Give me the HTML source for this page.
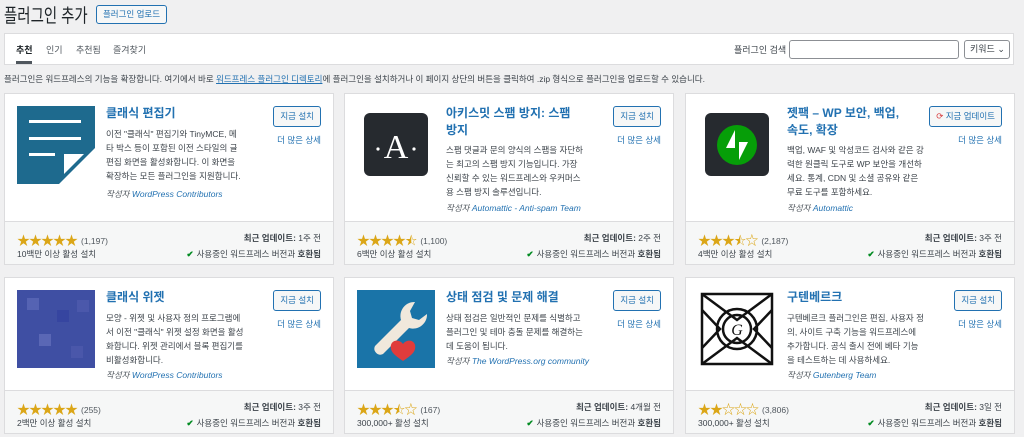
<!DOCTYPE html>
<html><head><meta charset="utf-8"><style>
*{margin:0;padding:0;box-sizing:border-box}
body{width:1024px;height:437px;overflow:hidden;background:#f0f0f1;font-family:"Liberation Sans","Noto Sans CJK KR",sans-serif;color:#3c434a;font-size:11px;position:relative}
.abs{position:absolute}
h1{position:absolute;left:4px;top:4px;font-size:19px;font-weight:400;color:#1d2327;line-height:26px;transform:scaleX(0.76);transform-origin:left;white-space:nowrap}
.upl{left:96px;top:5px;width:71px;height:19px;border:1px solid #2271b1;border-radius:3px;color:#2271b1;font-size:8.5px;line-height:17px;text-align:center;background:#f6f7f7}
.bar{left:4px;top:33px;width:1010px;height:32px;background:#fff;border:1px solid #dcdcde}
.tab{top:43px;font-size:9px;color:#50575e}
.desc{left:4px;top:73px;font-size:8.5px;color:#3c434a}
.desc a{color:#2271b1;text-decoration:underline}
.card{position:absolute;width:330px;height:172px;background:#fff;border:1px solid #dcdcde}
.foot{position:absolute;left:0;right:0;bottom:0;height:43px;background:#f6f7f7;border-top:1px solid #dcdcde}
.ic{position:absolute;left:12px;top:12px;width:78px;height:78px}
.tt{position:absolute;left:101px;top:11px;width:125px;font-size:12px;font-weight:700;color:#2271b1;line-height:17px}
.dd{position:absolute;left:101px;width:138px;font-size:8.5px;line-height:14px;color:#3c434a}
.by{position:absolute;left:101px;font-size:8.5px;font-style:italic;color:#50575e}
.by span{color:#2271b1}
.btn{position:absolute;right:12px;top:12px;height:21px;border:1px solid #2271b1;border-radius:3px;color:#2271b1;font-size:8.5px;line-height:19px;padding:0 6px;background:#f6f7f7}
.more{position:absolute;right:12px;top:40px;font-size:8.5px;color:#2271b1}
.st{position:absolute;left:12px;top:8px;font-size:13px;color:#dba617;letter-spacing:-1px}
.st i{font-style:normal;font-size:8.5px;color:#50575e;letter-spacing:0;margin-left:4px;vertical-align:1px}
.inst{position:absolute;left:12px;top:26px;font-size:8.5px}
.upd{position:absolute;right:12px;top:10px;font-size:8.5px}
.cmp{position:absolute;right:12px;top:26px;font-size:8.5px}
.cmp b,.upd b{font-weight:700}
.ok{color:#008a20;font-weight:700;margin-right:3px}
.r2{top:277px;height:157px}
</style></head><body>
<h1>플러그인 추가</h1>
<div class="abs upl">플러그인 업로드</div>
<div class="abs bar"></div>
<div class="abs tab" style="left:16px;color:#1d2327;font-weight:700">추천</div>
<div class="abs" style="left:16px;top:61px;width:16px;height:3px;background:#50575e"></div>
<div class="abs tab" style="left:46px">인기</div>
<div class="abs tab" style="left:76px">추천됨</div>
<div class="abs tab" style="left:113px">즐겨찾기</div>
<div class="abs" style="left:734px;top:43px;font-size:9px">플러그인 검색</div>
<div class="abs" style="left:789px;top:40px;width:170px;height:19px;border:1px solid #8c8f94;border-radius:3px;background:#fff"></div>
<div class="abs" style="left:964px;top:40px;width:46px;height:19px;border:1px solid #8c8f94;border-radius:3px;background:#fff;font-size:9px;line-height:17px;padding-left:5px">키워드 ⌄</div>
<div class="abs desc">플러그인은 워드프레스의 기능을 확장합니다. 여기에서 바로 <a>워드프레스 플러그인 디렉토리</a>에 플러그인을 설치하거나 이 페이지 상단의 버튼을 클릭하여 .zip 형식으로 플러그인을 업로드할 수 있습니다.</div>

<!-- row 1 -->
<div class="card" style="left:4px;top:93px">
 <svg class="ic" viewBox="0 0 78 78"><polygon points="0,0 78,0 78,42 42,78 0,78" fill="#1e6a8e"/><rect x="12" y="14" width="52" height="3" fill="#fff"/><rect x="12" y="31" width="52" height="3" fill="#fff"/><rect x="12" y="47" width="26" height="3" fill="#fff"/><polygon points="47,48 67,48 47,68" fill="#fff"/></svg>
 <div class="tt">클래식 편집기</div>
 <div class="dd" style="top:33px">이전 "클래식" 편집기와 TinyMCE, 메타 박스 등이 포함된 이전 스타일의 글 편집 화면을 활성화합니다. 이 화면을 확장하는 모든 플러그인을 지원합니다.</div>
 <div class="by" style="top:94px">작성자 <span>WordPress Contributors</span></div>
 <div class="btn">지금 설치</div><div class="more">더 많은 상세</div>
 <div class="foot"><div class="st">★★★★★<i>(1,197)</i></div><div class="inst">10백만 이상 활성 설치</div><div class="upd"><b>최근 업데이트:</b> 1주 전</div><div class="cmp"><span class="ok">✔</span>사용중인 워드프레스 버전과 <b>호환됨</b></div></div>
</div>
<div class="card" style="left:344px;top:93px">
 <svg class="ic" viewBox="0 0 78 78"><rect x="7" y="7" width="64" height="63" rx="6" fill="#262a2f"/><text x="39" y="52" text-anchor="middle" font-family="Liberation Serif,serif" font-size="34" fill="#fff">A</text><circle cx="21" cy="43" r="1.6" fill="#fff"/><circle cx="57" cy="43" r="1.6" fill="#fff"/></svg>
 <div class="tt">아키스밋 스팸 방지: 스팸 방지</div>
 <div class="dd" style="top:49px">스팸 댓글과 문의 양식의 스팸을 자단하는 최고의 스팸 방지 기능입니다. 가장 신뢰할 수 있는 워드프레스와 우커머스용 스팸 방지 솔루션입니다.</div>
 <div class="by" style="top:108px">작성자 <span>Automattic - Anti-spam Team</span></div>
 <div class="btn">지금 설치</div><div class="more">더 많은 상세</div>
 <div class="foot"><div class="st">★★★★<span>⯪</span><i>(1,100)</i></div><div class="inst">6백만 이상 활성 설치</div><div class="upd"><b>최근 업데이트:</b> 2주 전</div><div class="cmp"><span class="ok">✔</span>사용중인 워드프레스 버전과 <b>호환됨</b></div></div>
</div>
<div class="card" style="left:685px;top:93px">
 <svg class="ic" viewBox="0 0 78 78"><rect x="7" y="7" width="64" height="63" rx="6" fill="#262a2f"/><circle cx="39" cy="39" r="20" fill="#069e08"/><polygon points="37,24 37,42 28,42" fill="#fff"/><polygon points="41,54 41,36 50,36" fill="#fff"/></svg>
 <div class="tt">젯팩 – WP 보안, 백업, 속도, 확장</div>
 <div class="dd" style="top:49px">백업, WAF 및 악성코드 검사와 같은 강력한 원클릭 도구로 WP 보안을 개선하세요. 통계, CDN 및 소셜 공유와 같은 무료 도구를 포함하세요.</div>
 <div class="by" style="top:108px">작성자 <span>Automattic</span></div>
 <div class="btn"><span style="color:#d63638">⟳</span> 지금 업데이트</div><div class="more">더 많은 상세</div>
 <div class="foot"><div class="st">★★★<span>⯪</span><span>☆</span><i>(2,187)</i></div><div class="inst">4백만 이상 활성 설치</div><div class="upd"><b>최근 업데이트:</b> 3주 전</div><div class="cmp"><span class="ok">✔</span>사용중인 워드프레스 버전과 <b>호환됨</b></div></div>
</div>

<!-- row 2 -->
<div class="card r2" style="left:4px">
 <svg class="ic" viewBox="0 0 78 78"><rect width="78" height="78" fill="#3f4fa3"/><rect x="10" y="8" width="12" height="12" fill="#5563b3"/><rect x="40" y="20" width="12" height="12" fill="#3645a0"/><rect x="22" y="44" width="12" height="12" fill="#5a67b5"/><rect x="54" y="56" width="12" height="12" fill="#4a57aa"/><rect x="60" y="10" width="12" height="12" fill="#4b58ab"/></svg>
 <div class="tt">클래식 위젯</div>
 <div class="dd" style="top:33px">모양 - 위젯 및 사용자 정의 프로그램에서 이전 "클래식" 위젯 설정 화면을 활성화합니다. 위젯 관리에서 블록 편집기를 비활성화합니다.</div>
 <div class="by" style="top:91px">작성자 <span>WordPress Contributors</span></div>
 <div class="btn">지금 설치</div><div class="more">더 많은 상세</div>
 <div class="foot"><div class="st">★★★★★<i>(255)</i></div><div class="inst">2백만 이상 활성 설치</div><div class="upd"><b>최근 업데이트:</b> 3주 전</div><div class="cmp"><span class="ok">✔</span>사용중인 워드프레스 버전과 <b>호환됨</b></div></div>
</div>
<div class="card r2" style="left:344px">
 <svg class="ic" viewBox="0 0 78 78"><rect width="78" height="78" fill="#1a74a8"/><path d="M58 12 a14 14 0 0 0 -14 18 L18 56 a6 6 0 0 0 8 8 L52 38 a14 14 0 0 0 18 -14 l-8 6 -7 -2 -2 -7 z" fill="#f0e8dc"/><path d="M46 54 c-4-6-14-4-12 5 c1 5 8 9 12 12 c4-3 11-7 12-12 c2-9-8-11-12-5z" fill="#e03c3c"/></svg>
 <div class="tt">상태 점검 및 문제 해결</div>
 <div class="dd" style="top:33px">상태 점검은 일반적인 문제를 식별하고 플러그인 및 테마 충돌 문제를 해결하는데 도움이 됩니다.</div>
 <div class="by" style="top:77px">작성자 <span>The WordPress.org community</span></div>
 <div class="btn">지금 설치</div><div class="more">더 많은 상세</div>
 <div class="foot"><div class="st">★★★<span>⯪</span><span>☆</span><i>(167)</i></div><div class="inst">300,000+ 활성 설치</div><div class="upd"><b>최근 업데이트:</b> 4개월 전</div><div class="cmp"><span class="ok">✔</span>사용중인 워드프레스 버전과 <b>호환됨</b></div></div>
</div>
<div class="card r2" style="left:685px">
 <svg class="ic" viewBox="0 0 78 78"><rect width="78" height="78" fill="#fff"/><g fill="none" stroke="#111" stroke-width="2.5"><rect x="4" y="4" width="70" height="70"/><path d="M4 4 L39 30 L74 4 M4 74 L39 48 L74 74 M4 20 L22 39 L4 58 M74 20 L56 39 L74 58"/><circle cx="39" cy="39" r="14"/><circle cx="39" cy="39" r="20"/></g><text x="39" y="45" text-anchor="middle" font-family="Liberation Serif,serif" font-size="16" font-style="italic" fill="#111">G</text></svg>
 <div class="tt">구텐베르크</div>
 <div class="dd" style="top:33px">구텐베르크 플러그인은 편집, 사용자 정의, 사이트 구축 기능을 워드프레스에 추가합니다. 공식 출시 전에 베타 기능을 테스트하는 데 사용하세요.</div>
 <div class="by" style="top:91px">작성자 <span>Gutenberg Team</span></div>
 <div class="btn">지금 설치</div><div class="more">더 많은 상세</div>
 <div class="foot"><div class="st">★★☆☆☆<i>(3,806)</i></div><div class="inst">300,000+ 활성 설치</div><div class="upd"><b>최근 업데이트:</b> 3일 전</div><div class="cmp"><span class="ok">✔</span>사용중인 워드프레스 버전과 <b>호환됨</b></div></div>
</div>
</body></html>
